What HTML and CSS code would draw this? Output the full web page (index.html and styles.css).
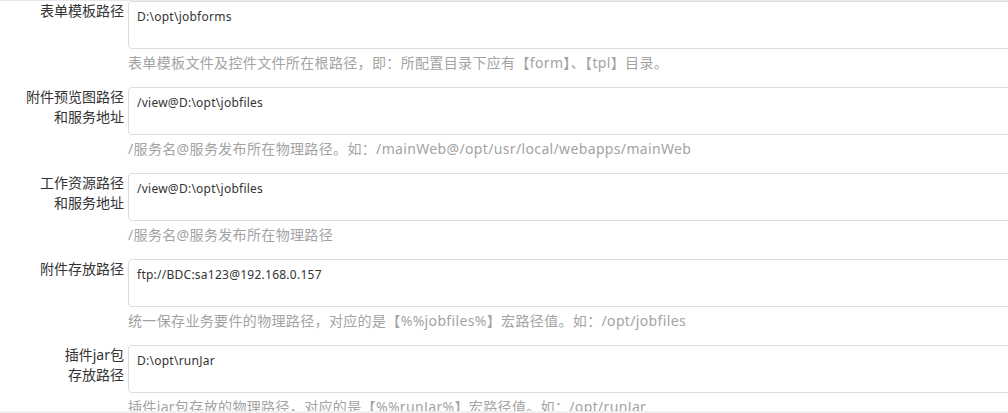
FILE: index.html
```html
<!DOCTYPE html>
<html lang="zh-CN">
<head>
<meta charset="utf-8">
<title>路径配置</title>
<link rel="stylesheet" href="styles.css">
</head>
<body>
<div class="viewport">
  <form class="form">
    <div class="row">
      <label class="label">表单模板路径</label>
      <div class="field">
        <textarea class="input">D:\opt\jobforms</textarea>
        <p class="help">表单模板文件及控件文件所在根路径，即：所配置目录下应有【form】、【tpl】目录。</p>
      </div>
    </div>
    <div class="row">
      <label class="label">附件预览图路径<br>和服务地址</label>
      <div class="field">
        <textarea class="input">/view@D:\opt\jobfiles</textarea>
        <p class="help">/服务名@服务发布所在物理路径。如：/mainWeb@/opt/usr/local/webapps/mainWeb</p>
      </div>
    </div>
    <div class="row">
      <label class="label">工作资源路径<br>和服务地址</label>
      <div class="field">
        <textarea class="input">/view@D:\opt\jobfiles</textarea>
        <p class="help">/服务名@服务发布所在物理路径</p>
      </div>
    </div>
    <div class="row">
      <label class="label">附件存放路径</label>
      <div class="field">
        <textarea class="input">ftp://BDC:sa123@192.168.0.157</textarea>
        <p class="help">统一保存业务要件的物理路径，对应的是【%%jobfiles%】宏路径值。如：/opt/jobfiles</p>
      </div>
    </div>
    <div class="row">
      <label class="label">插件jar包<br>存放路径</label>
      <div class="field">
        <textarea class="input">D:\opt\runJar</textarea>
        <p class="help">插件jar包存放的物理路径，对应的是【%%runJar%】宏路径值。如：/opt/runJar</p>
      </div>
    </div>
  </form>
</div>
<div class="hscroll"></div>
</body>
</html>
```
FILE: styles.css
```css
html, body {
  margin: 0;
  padding: 0;
  background: #fff;
  overflow: hidden;
}
body {
  font-family: "Noto Sans", "Noto Sans CJK SC", sans-serif;
  color: #333;
}
.viewport {
  height: 411px;
  overflow: hidden;
}
.form {
  width: 1100px;
  border-top: 1px solid #e8e9ee;
}
.row {
  display: flex;
  gap: 4px;
  margin-bottom: 14px;
}
.label {
  width: 124px;
  flex: none;
  text-align: right;
  font-family: "Noto Sans", "Noto Sans CJK SC", sans-serif;
  font-size: 14px;
  line-height: 20px;
  color: #333;
}
.field {
  flex: none;
  width: 940px;
}
.input {
  display: block;
  box-sizing: border-box;
  width: 100%;
  height: 48px;
  margin: 0;
  padding: 6px 8px;
  border: 1px solid #dcdcdc;
  border-radius: 4px;
  font-family: "Noto Sans", "Noto Sans CJK SC", sans-serif;
  font-size: 12px;
  line-height: 17px;
  letter-spacing: 0.25px;
  color: #333;
  resize: none;
  overflow: hidden;
  outline: none;
  background: #fff;
}
.help {
  margin: 4px 0 0;
  font-size: 14px;
  line-height: 20px;
  letter-spacing: 0.35px;
  color: #a3a3a3;
  white-space: nowrap;
}
.hscroll {
  height: 2px;
  background: #f0f0f0;
}
```
